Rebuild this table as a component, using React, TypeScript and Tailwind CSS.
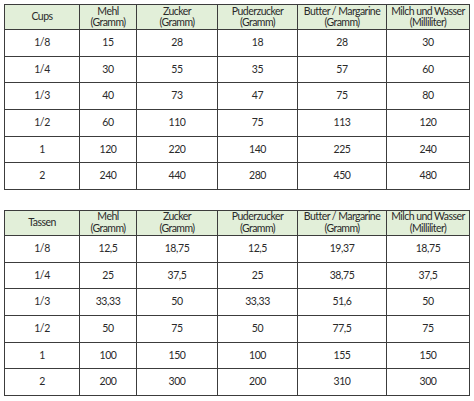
import React from "react";

const cols = "grid grid-cols-[75px_57px_81px_80px_89px_83px]";

const headers = (first: string) => [
  [first],
  ["Mehl", "(Gramm)"],
  ["Zucker", "(Gramm)"],
  ["Puderzucker", "(Gramm)"],
  ["Butter / Margarine", "(Gramm)"],
  ["Milch und Wasser", "(Milliliter)"],
];

const t1 = [
  ["1/8", "15", "28", "18", "28", "30"],
  ["1/4", "30", "55", "35", "57", "60"],
  ["1/3", "40", "73", "47", "75", "80"],
  ["1/2", "60", "110", "75", "113", "120"],
  ["1", "120", "220", "140", "225", "240"],
  ["2", "240", "440", "280", "450", "480"],
];

const t2 = [
  ["1/8", "12,5", "18,75", "12,5", "19,37", "18,75"],
  ["1/4", "25", "37,5", "25", "38,75", "37,5"],
  ["1/3", "33,33", "50", "33,33", "51,6", "50"],
  ["1/2", "50", "75", "50", "77,5", "75"],
  ["1", "100", "150", "100", "155", "150"],
  ["2", "200", "300", "200", "310", "300"],
];

function Table({ first, rows }: { first: string; rows: string[][] }) {
  return (
    <div className="border-l border-t border-[#3c3c3c] w-fit">
      <div className={cols}>
        {headers(first).map((h, i) => (
          <div
            key={i}
            className="h-[25px] bg-[#e2efd9] border-r border-b border-[#3c3c3c] flex flex-col items-center justify-center leading-[11.5px] text-[10.5px] tracking-[-0.55px] whitespace-nowrap text-[#2a2a2a]"
          >
            {h.map((l, j) => (
              <span key={j}>{l}</span>
            ))}
          </div>
        ))}
      </div>
      {rows.map((r, ri) => (
        <div key={ri} className={cols}>
          {r.map((c, ci) => (
            <div
              key={ci}
              className="h-[26.67px] border-r border-b border-[#3c3c3c] flex items-center justify-center text-[10.5px] tracking-[-0.4px] text-[#2a2a2a]"
            >
              {c}
            </div>
          ))}
        </div>
      ))}
    </div>
  );
}

export default function App() {
  return (
    <div
      className="w-[474px] h-[401px] bg-white pt-[4px] pl-[4px] flex flex-col gap-[20px]"
      style={{ fontFamily: "Lato, 'Open Sans', sans-serif" }}
    >
      <Table first="Cups" rows={t1} />
      <Table first="Tassen" rows={t2} />
    </div>
  );
}
